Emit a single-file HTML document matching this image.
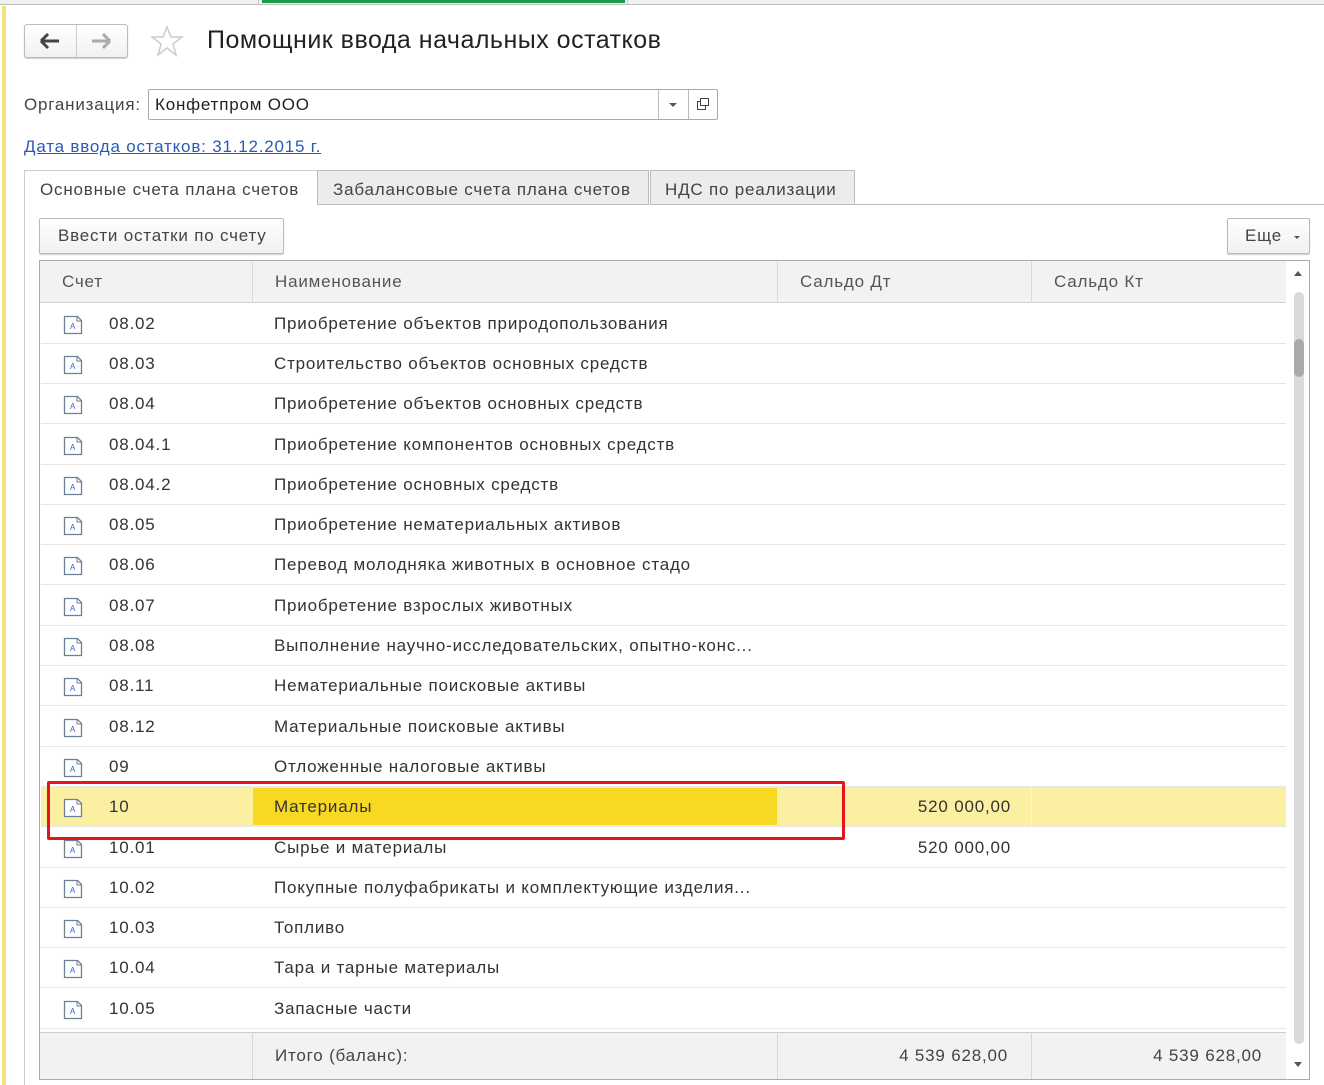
<!DOCTYPE html>
<html><head><meta charset="utf-8"><style>
*{box-sizing:border-box;margin:0;padding:0}
body{width:1324px;height:1085px;overflow:hidden;background:#fff;font-family:"Liberation Sans",Arial,sans-serif;color:#333;position:relative;letter-spacing:0.8px}
.a{position:absolute}
.t{font-size:17px;white-space:nowrap}
.row{position:absolute;left:41px;width:1245px;height:40px;border-bottom:1px solid #e6e6e6}
.row .ic{position:absolute;left:22px;top:11px}
.row .c1{position:absolute;left:68px;top:10px;font-size:17px}
.row .c2{position:absolute;left:233px;top:10px;font-size:17px;white-space:nowrap}
.row .c3{position:absolute;left:736px;width:234px;top:10px;font-size:17px;text-align:right}
</style></head><body>
<div class="a" style="left:0;top:0;width:1324px;height:5px;background:#f0f0ee;border-bottom:1px solid #bdbdbd"></div>
<div class="a" style="left:258px;top:0;width:370px;height:5px;border-left:1px solid #ccc;border-right:1px solid #ccc"></div>
<div class="a" style="left:262px;top:0;width:363px;height:3px;background:#1d9a4a"></div>
<div class="a" style="left:2px;top:6px;width:4px;height:1079px;background:#f2e27a"></div>

<div class="a" style="left:24px;top:24px;width:104px;height:34px;border:1px solid #bbb;border-radius:3px;background:linear-gradient(#fff,#f1f1f1);box-shadow:0 1px 1px #ccc"></div>
<div class="a" style="left:76px;top:25px;width:1px;height:32px;background:#ccc"></div>
<svg class="a" style="left:38px;top:31px" width="24" height="20"><path d="M3 10H21M3 10L10 3M3 10L10 17" stroke="#444" stroke-width="3" fill="none"/></svg>
<svg class="a" style="left:89px;top:31px" width="24" height="20"><path d="M3 10H21M21 10L14 3M21 10L14 17" stroke="#aaa" stroke-width="3" fill="none"/></svg>
<svg class="a" style="left:150px;top:24px" width="34" height="34"><path d="M17 3L21 13L32 13L23 20L26 31L17 24L8 31L11 20L2 13L13 13Z" fill="none" stroke="#ccc" stroke-width="1.5"/></svg>
<div class="a" style="left:207px;top:26px;font-size:25px;color:#222;letter-spacing:0.5px;white-space:nowrap">Помощник ввода начальных остатков</div>

<div class="a t" style="left:24px;top:95px;color:#444">Организация:</div>
<div class="a" style="left:148px;top:89px;width:570px;height:31px;border:1px solid #aaa;border-radius:2px"></div>
<div class="a t" style="left:155px;top:95px;color:#222">Конфетпром ООО</div>
<div class="a" style="left:658px;top:90px;width:1px;height:29px;background:#bbb"></div>
<div class="a" style="left:688px;top:90px;width:1px;height:29px;background:#bbb"></div>
<div class="a" style="left:669px;top:103px;width:0;height:0;border-left:4px solid transparent;border-right:4px solid transparent;border-top:4px solid #555"></div>
<svg class="a" style="left:696px;top:97px" width="14" height="14"><rect x="4.5" y="1.5" width="8" height="7" fill="none" stroke="#444"/><path d="M4.5 4.5H1.5V12.5H9.5V8.5" fill="none" stroke="#444"/></svg>

<div class="a t" style="left:24px;top:137px;color:#2a5bb5;text-decoration:underline">Дата ввода остатков: 31.12.2015 г.</div>

<div class="a" style="left:855px;top:204px;width:469px;height:1px;background:#bbb"></div>
<div class="a" style="left:317px;top:170px;width:332px;height:35px;background:#ececec;border:1px solid #bbb"></div>
<div class="a t" style="left:333px;top:180px;color:#444">Забалансовые счета плана счетов</div>
<div class="a" style="left:650px;top:170px;width:205px;height:35px;background:#ececec;border:1px solid #bbb"></div>
<div class="a t" style="left:665px;top:180px;color:#444">НДС по реализации</div>
<div class="a" style="left:24px;top:170px;width:293px;height:915px;border:1px solid #ccc;border-bottom:none;border-right:none;background:#fff"></div>
<div class="a" style="left:25px;top:205px;width:292px;height:2px;background:#fff"></div>
<div class="a t" style="left:40px;top:180px;color:#444">Основные счета плана счетов</div>

<div class="a" style="left:39px;top:218px;width:245px;height:36px;border:1px solid #bbb;border-radius:2px;background:linear-gradient(#fff,#f0f0f0);box-shadow:0 1px 1px #ccc"></div>
<div class="a t" style="left:58px;top:226px;color:#444">Ввести остатки по счету</div>
<div class="a" style="left:1227px;top:218px;width:83px;height:36px;border:1px solid #bbb;border-radius:2px;background:linear-gradient(#fff,#f0f0f0);box-shadow:0 1px 1px #ccc"></div>
<div class="a t" style="left:1245px;top:226px;color:#444">Еще</div>
<div class="a" style="left:1294px;top:236px;border-left:3.5px solid transparent;border-right:3.5px solid transparent;border-top:3.5px solid #555"></div>

<div class="a" style="left:39px;top:260px;width:1271px;height:820px;border:1px solid #aaa"></div>
<div class="a" style="left:40px;top:261px;width:1246px;height:42px;background:#f2f2f2;border-bottom:1px solid #d0d0d0"></div>
<div class="a" style="left:252px;top:261px;width:1px;height:42px;background:#d8d8d8"></div>
<div class="a" style="left:777px;top:261px;width:1px;height:42px;background:#d8d8d8"></div>
<div class="a" style="left:1031px;top:261px;width:1px;height:42px;background:#d8d8d8"></div>
<div class="a t" style="left:62px;top:272px;color:#555">Счет</div>
<div class="a t" style="left:275px;top:272px;color:#555">Наименование</div>
<div class="a t" style="left:800px;top:272px;color:#555">Сальдо Дт</div>
<div class="a t" style="left:1054px;top:272px;color:#555">Сальдо Кт</div>

<svg width="0" height="0" style="position:absolute"><defs><symbol id="doc" viewBox="0 0 20 20"><path d="M1.5 1.5H14.5L18.5 5.5V18.5H1.5Z" fill="#fff" stroke="#6d8196" stroke-width="1.3"/><path d="M14 1.5V6H18.5" fill="none" stroke="#6d8196" stroke-width="1"/><text x="7" y="14" font-size="8" fill="#3a5bd0" font-family="Liberation Sans">A</text></symbol></defs></svg>

<div class="row" style="top:304px"><svg class="ic" width="20" height="20"><use href="#doc"/></svg><span class="c1">08.02</span><span class="c2">Приобретение объектов природопользования</span></div>
<div class="row" style="top:344px"><svg class="ic" width="20" height="20"><use href="#doc"/></svg><span class="c1">08.03</span><span class="c2">Строительство объектов основных средств</span></div>
<div class="row" style="top:384px"><svg class="ic" width="20" height="20"><use href="#doc"/></svg><span class="c1">08.04</span><span class="c2">Приобретение объектов основных средств</span></div>
<div class="row" style="top:425px"><svg class="ic" width="20" height="20"><use href="#doc"/></svg><span class="c1">08.04.1</span><span class="c2">Приобретение компонентов основных средств</span></div>
<div class="row" style="top:465px"><svg class="ic" width="20" height="20"><use href="#doc"/></svg><span class="c1">08.04.2</span><span class="c2">Приобретение основных средств</span></div>
<div class="row" style="top:505px"><svg class="ic" width="20" height="20"><use href="#doc"/></svg><span class="c1">08.05</span><span class="c2">Приобретение нематериальных активов</span></div>
<div class="row" style="top:545px"><svg class="ic" width="20" height="20"><use href="#doc"/></svg><span class="c1">08.06</span><span class="c2">Перевод молодняка животных в основное стадо</span></div>
<div class="row" style="top:586px"><svg class="ic" width="20" height="20"><use href="#doc"/></svg><span class="c1">08.07</span><span class="c2">Приобретение взрослых животных</span></div>
<div class="row" style="top:626px"><svg class="ic" width="20" height="20"><use href="#doc"/></svg><span class="c1">08.08</span><span class="c2">Выполнение научно-исследовательских, опытно-конс...</span></div>
<div class="row" style="top:666px"><svg class="ic" width="20" height="20"><use href="#doc"/></svg><span class="c1">08.11</span><span class="c2">Нематериальные поисковые активы</span></div>
<div class="row" style="top:707px"><svg class="ic" width="20" height="20"><use href="#doc"/></svg><span class="c1">08.12</span><span class="c2">Материальные поисковые активы</span></div>
<div class="row" style="top:747px"><svg class="ic" width="20" height="20"><use href="#doc"/></svg><span class="c1">09</span><span class="c2">Отложенные налоговые активы</span></div>
<div class="row" style="top:787px;background:#fbf0a2"><div class="a" style="left:212px;top:1px;width:524px;height:37px;background:#f7d923"></div><div class="a" style="left:990px;top:0;width:1px;height:40px;background:#fff6c8"></div><svg class="ic" width="20" height="20"><use href="#doc"/></svg><span class="c1">10</span><span class="c2">Материалы</span><span class="c3">520 000,00</span></div>
<div class="row" style="top:828px"><svg class="ic" width="20" height="20"><use href="#doc"/></svg><span class="c1">10.01</span><span class="c2">Сырье и материалы</span><span class="c3">520 000,00</span></div>
<div class="row" style="top:868px"><svg class="ic" width="20" height="20"><use href="#doc"/></svg><span class="c1">10.02</span><span class="c2">Покупные полуфабрикаты и комплектующие изделия...</span></div>
<div class="row" style="top:908px"><svg class="ic" width="20" height="20"><use href="#doc"/></svg><span class="c1">10.03</span><span class="c2">Топливо</span></div>
<div class="row" style="top:948px"><svg class="ic" width="20" height="20"><use href="#doc"/></svg><span class="c1">10.04</span><span class="c2">Тара и тарные материалы</span></div>
<div class="row" style="top:989px"><svg class="ic" width="20" height="20"><use href="#doc"/></svg><span class="c1">10.05</span><span class="c2">Запасные части</span></div>

<div class="a" style="left:40px;top:1032px;width:1246px;height:47px;background:#f2f2f2;border-top:1px solid #ccc"></div>
<div class="a" style="left:252px;top:1032px;width:1px;height:47px;background:#d8d8d8"></div>
<div class="a" style="left:777px;top:1032px;width:1px;height:47px;background:#d8d8d8"></div>
<div class="a" style="left:1031px;top:1032px;width:1px;height:47px;background:#d8d8d8"></div>
<div class="a t" style="left:275px;top:1046px;color:#444">Итого (баланс):</div>
<div class="a t" style="left:777px;width:231px;text-align:right;top:1046px;color:#444">4 539 628,00</div>
<div class="a t" style="left:1031px;width:231px;text-align:right;top:1046px;color:#444">4 539 628,00</div>

<div class="a" style="left:1294px;top:271px;border-left:4px solid transparent;border-right:4px solid transparent;border-bottom:5px solid #555"></div>
<div class="a" style="left:1294px;top:292px;width:10px;height:752px;border-radius:5px;background:#dadada"></div>
<div class="a" style="left:1294px;top:339px;width:10px;height:38px;border-radius:5px;background:#a9a9a9"></div>
<div class="a" style="left:1294px;top:1062px;border-left:4px solid transparent;border-right:4px solid transparent;border-top:5px solid #555"></div>

<div class="a" style="left:47px;top:781px;width:798px;height:59px;border:3px solid #e8141b;border-radius:2px"></div>
</body></html>
